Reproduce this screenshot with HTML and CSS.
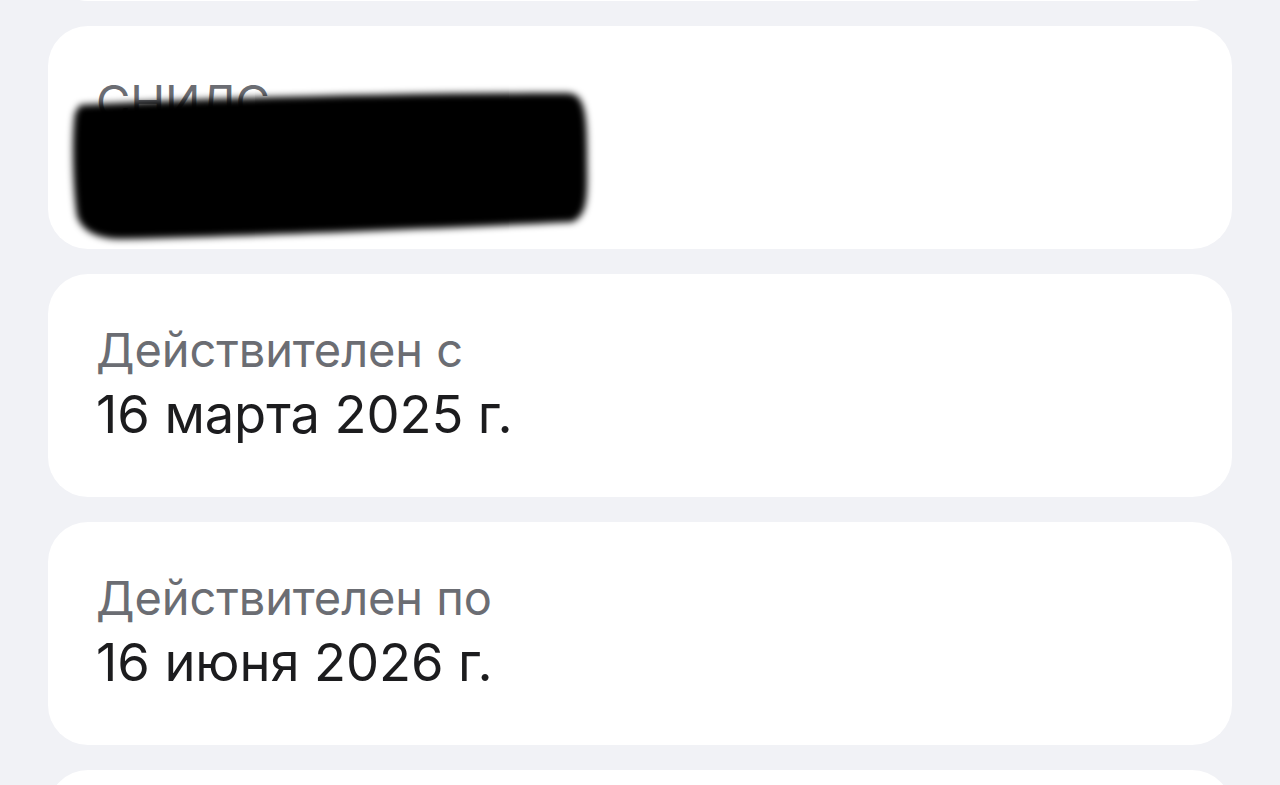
FILE: index.html
```html
<!DOCTYPE html>
<html lang="ru">
<head>
<meta charset="utf-8">
<title>Документ</title>
<link rel="stylesheet" href="styles.css">
</head>
<body>
<main class="list">
  <section class="card"></section>
  <section class="card">
    <div class="label">СНИЛС</div>
    <div class="value">000-000-000 00</div>
    <svg class="redact" viewBox="0 0 1184 223" aria-hidden="true">
      <defs>
        <filter id="soft" x="-10%" y="-20%" width="120%" height="140%">
          <feGaussianBlur stdDeviation="3.5"/>
        </filter>
      </defs>
      <g transform="translate(-48,-25)" filter="url(#soft)">
        <path d="M 80 104 C 200 97, 400 92, 568 92 C 584 93, 587 110, 587 150 C 587 190, 590 214, 572 221 C 450 227, 250 235, 125 238 C 100 239, 82 231, 77 215 C 72 180, 72 130, 75 112 Z" fill="#000"/>
      </g>
    </svg>
  </section>
  <section class="card">
    <div class="label">Действителен с</div>
    <div class="value">16 марта 2025 г.</div>
  </section>
  <section class="card">
    <div class="label">Действителен по</div>
    <div class="value">16 июня 2026 г.</div>
  </section>
  <section class="card"></section>
</main>
</body>
</html>
```
FILE: styles.css
```css
html, body {
  margin: 0;
  padding: 0;
  background: #f1f2f6;
}
body {
  font-family: Inter, "Noto Sans", sans-serif;
  overflow: hidden;
  height: 785px;
}
.list {
  display: flex;
  flex-direction: column;
  gap: 25px;
  padding: 0 48px;
  margin-top: -222px;
}
.card {
  position: relative;
  background: #ffffff;
  border-radius: 40px;
  height: 223px;
  box-sizing: border-box;
  padding: 49px 48px 0 48px;
}
.label {
  font-size: 47px;
  line-height: 54px;
  color: #6b6d73;
  letter-spacing: -0.1px;
}
.value {
  font-size: 52.5px;
  line-height: 75px;
  color: #1c1c1e;
  letter-spacing: -0.1px;
}
.redact {
  position: absolute;
  left: 0;
  top: 0;
  width: 1184px;
  height: 223px;
}
```
